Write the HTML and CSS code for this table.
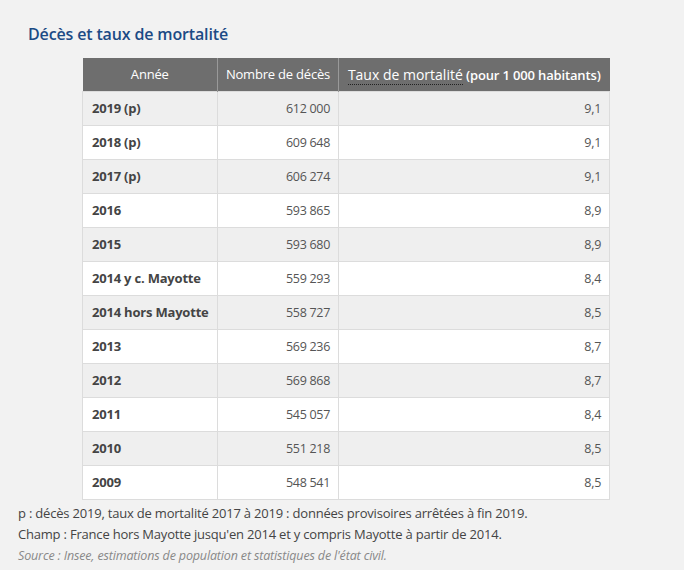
FILE: index.html
```html
<!DOCTYPE html>
<html lang="fr">
<head>
<meta charset="utf-8">
<link rel="stylesheet" href="styles.css">
</head>
<body>
<div class="page">
  <h2 class="title">Décès et taux de mortalité</h2>
  <table class="data">
    <thead>
      <tr>
        <th class="c1">Année</th>
        <th class="c2">Nombre de décès</th>
        <th class="c3"><abbr class="abbr">Taux de mortalité</abbr> <span class="unit">(pour 1 000 habitants)</span></th>
      </tr>
    </thead>
    <tbody>
      <tr><td class="yr">2019 (p)</td><td class="num">612 000</td><td class="num">9,1</td></tr>
      <tr><td class="yr">2018 (p)</td><td class="num">609 648</td><td class="num">9,1</td></tr>
      <tr><td class="yr">2017 (p)</td><td class="num">606 274</td><td class="num">9,1</td></tr>
      <tr><td class="yr">2016</td><td class="num">593 865</td><td class="num">8,9</td></tr>
      <tr><td class="yr">2015</td><td class="num">593 680</td><td class="num">8,9</td></tr>
      <tr><td class="yr">2014 y c. Mayotte</td><td class="num">559 293</td><td class="num">8,4</td></tr>
      <tr><td class="yr">2014 hors Mayotte</td><td class="num">558 727</td><td class="num">8,5</td></tr>
      <tr><td class="yr">2013</td><td class="num">569 236</td><td class="num">8,7</td></tr>
      <tr><td class="yr">2012</td><td class="num">569 868</td><td class="num">8,7</td></tr>
      <tr><td class="yr">2011</td><td class="num">545 057</td><td class="num">8,4</td></tr>
      <tr><td class="yr">2010</td><td class="num">551 218</td><td class="num">8,5</td></tr>
      <tr><td class="yr">2009</td><td class="num">548 541</td><td class="num">8,5</td></tr>
    </tbody>
  </table>
  <div class="notes">
    <p>p : décès 2019, taux de mortalité 2017 à 2019 : données provisoires arrêtées à fin 2019.</p>
    <p>Champ : France hors Mayotte jusqu'en 2014 et y compris Mayotte à partir de 2014.</p>
    <p class="source">Source : Insee, estimations de population et statistiques de l'état civil.</p>
  </div>
</div>
</body>
</html>
```

FILE: styles.css
```css
html, body {
  margin: 0;
  padding: 0;
  background: #f2f2f2;
}
body {
  font-family: "Open Sans", "Liberation Sans", sans-serif;
  color: #333;
  width: 684px;
  height: 570px;
  overflow: hidden;
}
.page {
  padding: 22px 0 0 0;
}
.title {
  margin: 0 0 12px 28px;
  font-size: 16px;
  font-weight: 600;
  color: #1b4a85;
  line-height: 24px;
  letter-spacing: -0.15px;
}
.data {
  margin-left: 82px;
  border-collapse: collapse;
  font-size: 12.5px;
  table-layout: fixed;
  width: 527px;
}
.data th {
  background: #6e6e6e;
  color: #fff;
  font-weight: 400;
  font-size: 13px;
  height: 33px;
  padding: 0 5px;
  border-left: 1px solid #999;
  white-space: nowrap;
  box-sizing: border-box;
  letter-spacing: -0.2px;
}
.data th:first-child { border-left: none; }
.c1 { width: 135px; }
.c2 { width: 121px; }
.c3 { width: 271px; }
.abbr {
  font-size: 14px;
  letter-spacing: 0;
  text-decoration: none;
  border-bottom: 1px dotted #222;
}
.unit { font-weight: 600; letter-spacing: -0.15px; }
.data td {
  height: 34px;
  box-sizing: border-box;
  padding: 0 8px 0 9px;
  border: 1px solid #dcdcdc;
  color: #555;
  letter-spacing: -0.3px;
  white-space: nowrap;
}
.data tbody tr:nth-child(odd) td { background: #efefef; }
.data tbody tr:nth-child(even) td { background: #fff; }
.data td.yr { font-weight: 700; color: #444; font-size: 13px; letter-spacing: -0.2px; }
.num { text-align: right; }
.notes {
  margin: 3px 0 0 18px;
  font-size: 13px;
  color: #444;
  letter-spacing: -0.2px;
}
.notes p {
  margin: 0;
  line-height: 21px;
}
.notes .source {
  font-style: italic;
  color: #888;
  font-size: 12.5px;
  letter-spacing: -0.15px;
}
```
